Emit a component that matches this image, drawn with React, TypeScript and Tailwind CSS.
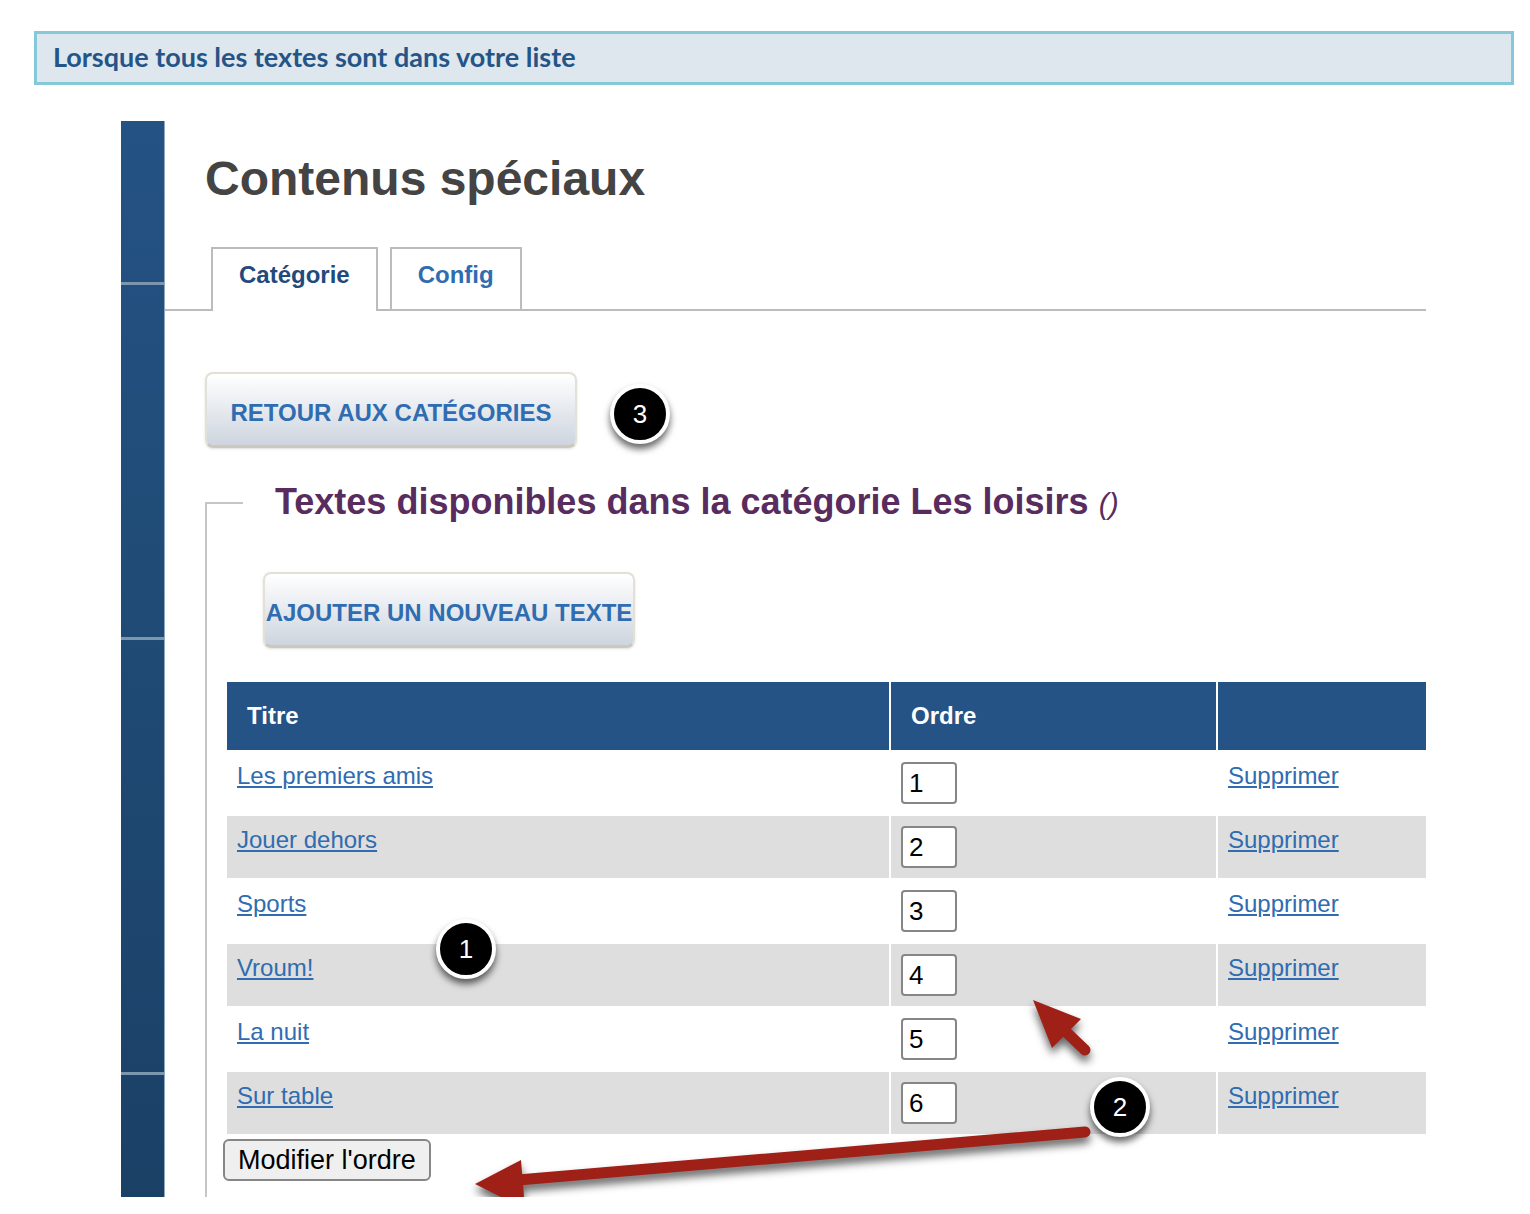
import React, { useState } from "react";

type Texte = {
    id: number;
    titre: string;
    ordre: string;
};

const TEXTES: Texte[] = [
    { id: 1, titre: "Les premiers amis", ordre: "1" },
    { id: 2, titre: "Jouer dehors", ordre: "2" },
    { id: 3, titre: "Sports", ordre: "3" },
    { id: 4, titre: "Vroum!", ordre: "4" },
    { id: 5, titre: "La nuit", ordre: "5" },
    { id: 6, titre: "Sur table", ordre: "6" },
];

function Sidebar() {
    return (
        <aside className="w-11 shrink-0 border-r border-[#8fa6bf] bg-linear-to-b from-[#245284] via-[#1f4a74] to-[#1b4066]">
            <div className="h-[164px] border-b-3 border-[#7c96ad]" />
            <div className="h-[355px] border-b-3 border-[#7c96ad]" />
            <div className="h-[435px] border-b-3 border-[#7c96ad]" />
        </aside>
    );
}

function Tabs() {
    return (
        <nav className="flex h-16 text-2xl leading-7 font-bold">
            <span className="w-[46px] border-b-2 border-[#bcbcbc]" />
            <a href="#categorie" className="border-2 border-b-0 border-[#bcbcbc] px-[26px] pt-3 text-[#1f4a7d]">
                Catégorie
            </a>
            <span className="w-3 border-b-2 border-[#bcbcbc]" />
            <a href="#config" className="border-2 border-[#bcbcbc] px-[26px] pt-3 text-[#2f6cb0]">
                Config
            </a>
            <span className="grow border-b-2 border-[#bcbcbc]" />
        </nav>
    );
}

function BigButton({ label }: { label: string }) {
    return (
        <button
            type="button"
            className="block h-[76px] w-[372px] rounded-lg border-2 border-b-3 border-[#e3e0d6] border-b-[#cbc8bf] bg-linear-to-b from-white to-[#ced5df] pt-[6px] text-2xl font-bold whitespace-nowrap text-[#2f6cb0] shadow-sm"
        >
            {label}
        </button>
    );
}

function Badge({ value, className }: { value: number; className: string }) {
    return (
        <span
            className={`absolute flex size-[60px] items-center justify-center rounded-full border-4 border-white bg-black text-[26px] text-white shadow-[0_5px_7px_rgba(0,0,0,0.6)] ${className}`}
        >
            {value}
        </span>
    );
}

function Arrows() {
    return (
        <svg
            className="pointer-events-none absolute top-0 left-0 h-[1076px] w-[1305px] drop-shadow-[0_6px_4px_rgba(0,0,0,0.6)]"
            viewBox="121 121 1305 1076"
            fill="#9f2017"
            stroke="#9f2017"
            aria-hidden="true"
        >
            <path d="M1033 1000 L1081 1019 L1052 1048 Z" stroke="none" />
            <path d="M1064 1030 L1085 1050" strokeWidth="11" strokeLinecap="round" />
            <path d="M475 1184 L521 1160 L525 1209 Z" stroke="none" />
            <path d="M518 1180 L1085 1132" strokeWidth="11" strokeLinecap="round" />
        </svg>
    );
}

function TextesTable() {
    const [textes, setTextes] = useState(TEXTES);

    const changeOrdre = (id: number, ordre: string) => {
        setTextes(textes.map((t) => (t.id === id ? { ...t, ordre } : t)));
    };

    return (
        <table className="w-full table-fixed border-separate border-spacing-0 text-left text-2xl leading-7">
            <thead>
                <tr className="h-[70px] text-white">
                    <th className="w-[664px] border-r-2 border-b-2 border-white bg-[#265385] bg-clip-padding pl-5">Titre</th>
                    <th className="w-[327px] border-r-2 border-b-2 border-white bg-[#265385] bg-clip-padding pl-5">Ordre</th>
                    <th className="border-b-2 border-white bg-[#265385]" aria-label="Actions" />
                </tr>
            </thead>
            <tbody>
                {textes.map((texte) => (
                    <tr key={texte.id} className="h-16 align-top even:bg-[#dedede]">
                        <td className="border-r-2 border-b-2 border-white pt-[10px] pl-[10px]">
                            <a href="#texte" className="text-[#2f6cb0] underline">{texte.titre}</a>
                        </td>
                        <td className="border-r-2 border-b-2 border-white pt-[10px] pl-[10px]">
                            <input
                                type="text"
                                aria-label={`Ordre de ${texte.titre}`}
                                value={texte.ordre}
                                onChange={(e) => changeOrdre(texte.id, e.target.value)}
                                className="block h-[42px] w-14 rounded-sm border-2 border-[#868686] bg-white pl-[6px] text-[26px] text-black"
                            />
                        </td>
                        <td className="border-b-2 border-white pt-[10px] pl-[10px]">
                            <a href="#supprimer" className="text-[#2f6cb0] underline">Supprimer</a>
                        </td>
                    </tr>
                ))}
            </tbody>
        </table>
    );
}

export default function App() {
    return (
        <div className="bg-white pt-[31px] pb-[17px] font-['Liberation_Sans',Arial,sans-serif]">
            <h2 className="mr-4 ml-[34px] h-[54px] border-3 border-[#85c8d8] bg-[#dfe7ee] pl-4 font-['Lato',sans-serif] text-[27px] leading-[46px] font-bold text-[#255587]">
                Lorsque tous les textes sont dans votre liste
            </h2>

            <div className="relative mt-9 mr-[104px] ml-[121px] flex h-[1076px] overflow-hidden">
                <Sidebar />
                <main className="min-w-0 grow">
                    <h1 className="pt-[30px] pl-10 text-5xl leading-14 font-bold text-[#444444]">Contenus spéciaux</h1>
                    <div className="mt-10">
                        <Tabs />
                    </div>
                    <div className="mt-[61px] ml-10">
                        <BigButton label="RETOUR AUX CATÉGORIES" />
                    </div>

                    <fieldset className="mt-8 ml-10 h-[720px] min-w-0 border-t-2 border-l-2 border-[#c6c6c6]">
                        <legend className="ml-9 w-full pl-8 text-4xl leading-11 font-bold text-[#592c60]">
                            Textes disponibles dans la catégorie Les loisirs{" "}
                            <em className="text-[30px] font-normal">()</em>
                        </legend>
                        <div className="mt-[46px] ml-14">
                            <BigButton label="AJOUTER UN NOUVEAU TEXTE" />
                        </div>
                        <div className="mt-[34px] ml-5">
                            <TextesTable />
                        </div>
                        <button
                            type="button"
                            className="mt-[3px] ml-4 h-[42px] rounded-md border-2 border-[#868686] bg-[#efefef] px-[13px] text-[27px] leading-9 text-black"
                        >
                            Modifier l'ordre
                        </button>
                    </fieldset>
                </main>

                <Arrows />
                <Badge value={3} className="top-[263px] left-[489px]" />
                <Badge value={1} className="top-[798px] left-[315px]" />
                <Badge value={2} className="top-[956px] left-[969px]" />
            </div>
        </div>
    );
}
